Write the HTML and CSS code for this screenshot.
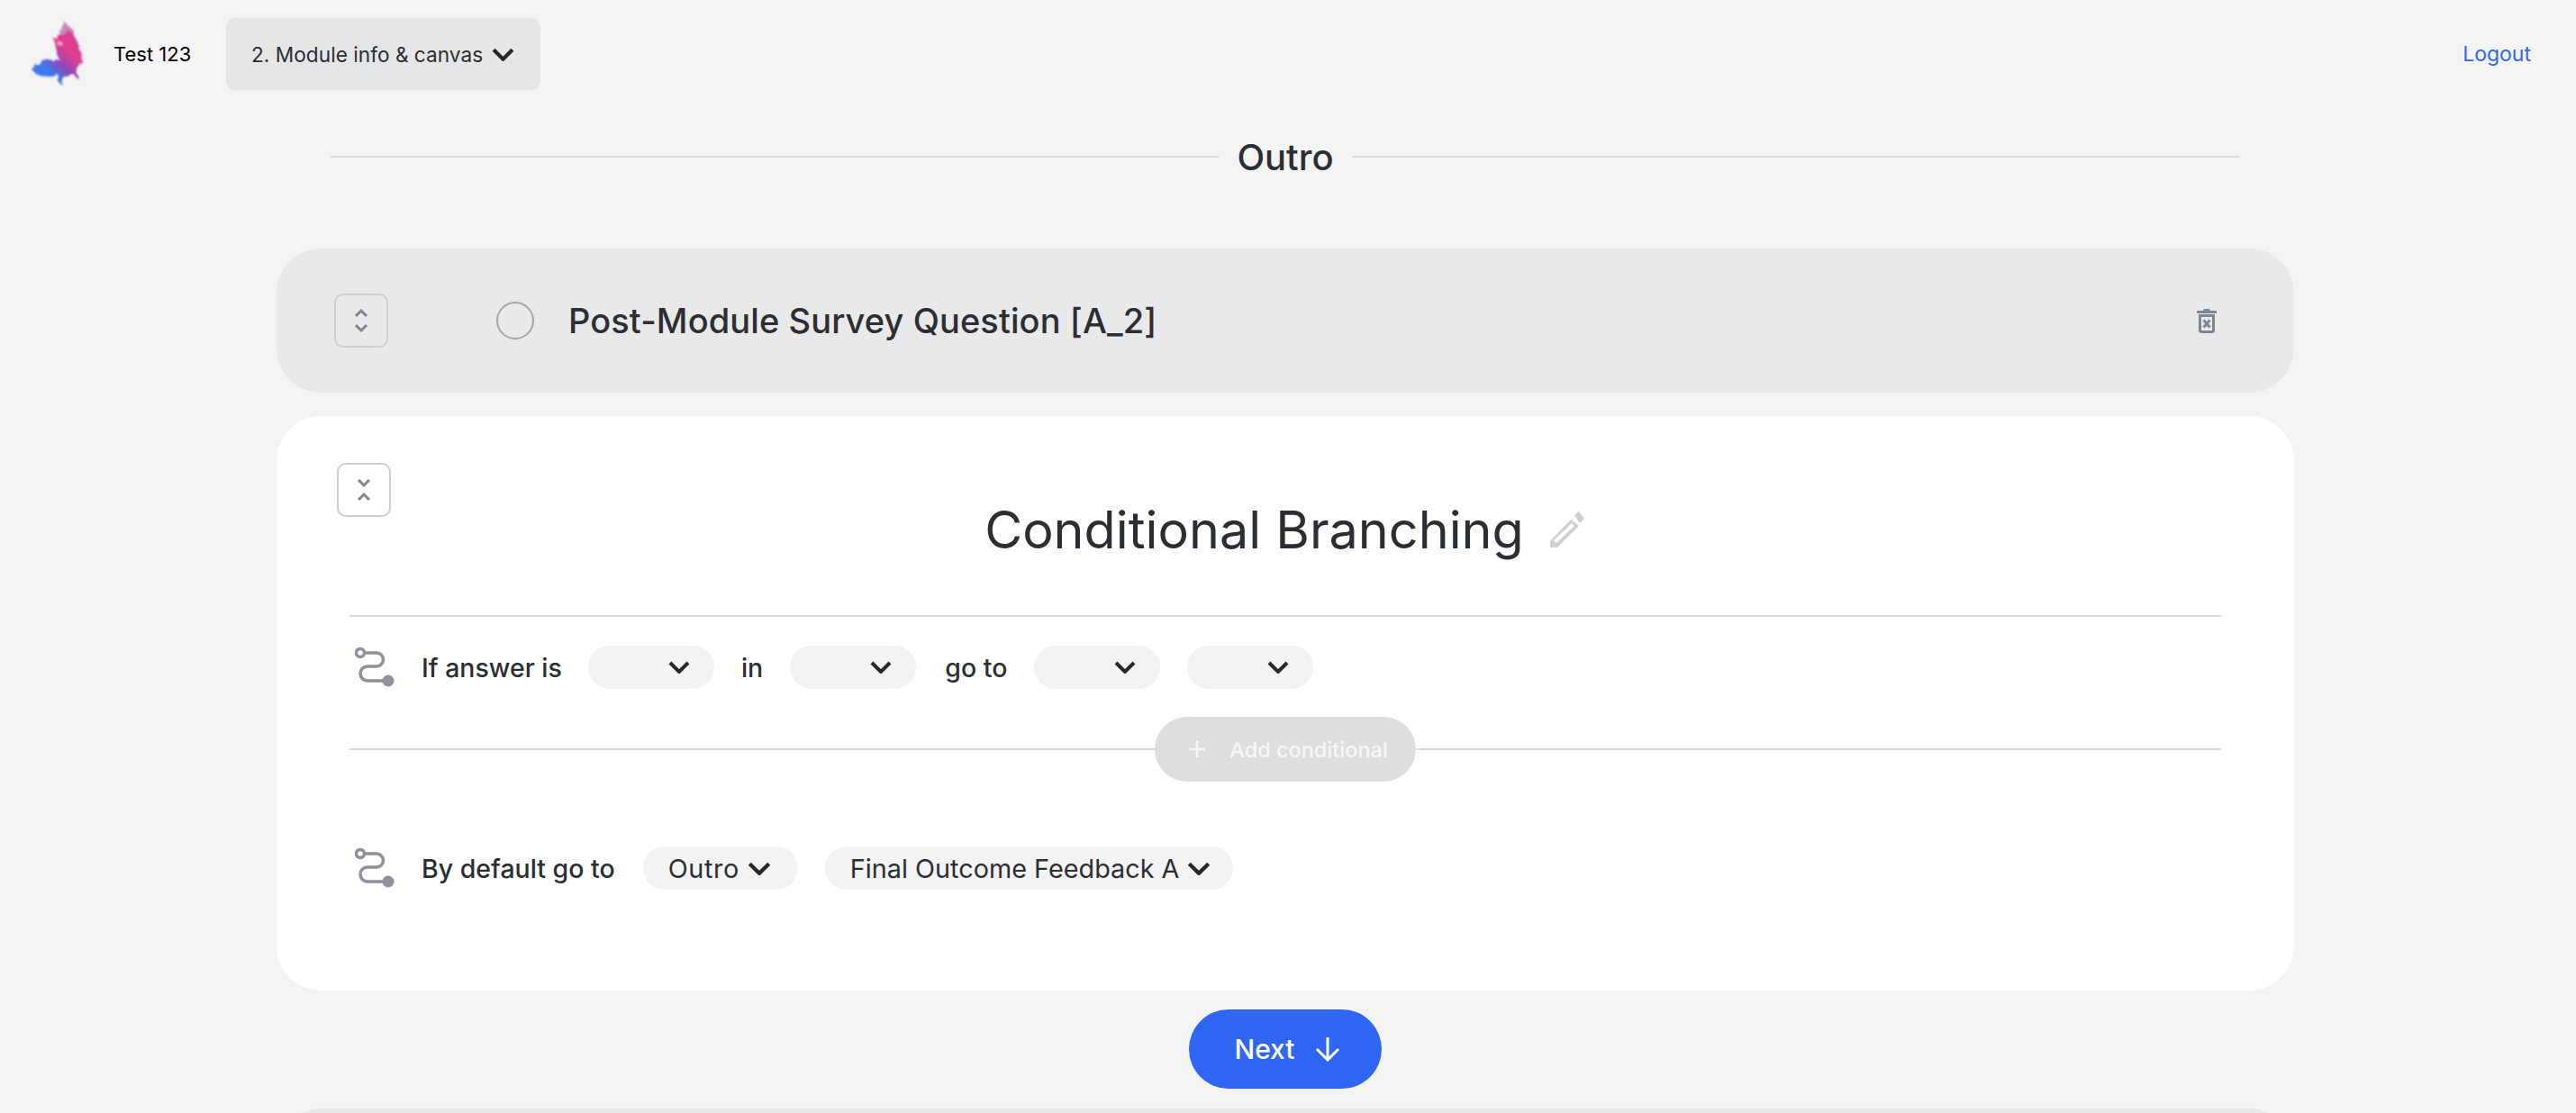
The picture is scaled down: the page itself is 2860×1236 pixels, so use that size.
FILE: index.html
```html
<!DOCTYPE html>
<html lang="en">
<head>
  <meta charset="UTF-8" />
  <meta name="viewport" content="width=device-width, initial-scale=1.0"/>
  <title>Test 123 - Module info &amp; canvas</title>
  <link rel="stylesheet" href="styles.css">
</head>
<body>
  <header class="topbar">
    <svg class="logo" viewBox="0 0 60 76" width="60" height="76" aria-hidden="true">
      <defs>
        <linearGradient id="logo-grad" gradientUnits="userSpaceOnUse" x1="46" y1="22" x2="14" y2="58">
          <stop offset="0" stop-color="#d9408f"/>
          <stop offset="0.25" stop-color="#e23d8c"/>
          <stop offset="0.6" stop-color="#9046bb"/>
          <stop offset="0.88" stop-color="#3f77ea"/>
        </linearGradient>
        <filter id="logo-ink" x="-10%" y="-10%" width="120%" height="120%">
          <feTurbulence type="fractalNoise" baseFrequency="0.14" numOctaves="2" seed="4" result="noise"/>
          <feDisplacementMap in="SourceGraphic" in2="noise" scale="7"/>
          <feGaussianBlur stdDeviation="0.8"/>
        </filter>
      </defs>
      <g filter="url(#logo-ink)">
        <path fill="#c58ac0" d="M37 1l4 5 6 5 2 10-12 2-4-9 2-6z"/>
        <path fill="url(#logo-grad)" d="M37 14l8-1 5 8 4 5 1 9 2 10-3 7-3 4 2 10-6-6-5 0-5 2-2 11-3-3-2-10-10 3-12-1-6-6 5-7 10-4 11-2 4 1-2-6-3-6 1-5-1-5 4-4 6-1z"/>
        <circle cx="33" cy="27" r="2.4" fill="#f0a8cc"/>
      </g>
    </svg>
    <span class="project-name">Test 123</span>
    <button class="step-select">2. Module info &amp; canvas
      <svg class="chevron" viewBox="0 0 24 14" width="25" height="15"><path d="M2 2l10 10L22 2"/></svg>
    </button>
    <a class="logout" href="#">Logout</a>
  </header>

  <main class="content">
    <div class="section-title">
      <span class="rule"></span>
      <h2>Outro</h2>
      <span class="rule"></span>
    </div>

    <section class="card card-closed">
      <button class="toggle">
        <svg viewBox="0 0 16 26" width="16" height="26"><path d="M2 8l6-6 6 6M2 18l6 6 6-6"/></svg>
      </button>
      <span class="radio"></span>
      <h3>Post-Module Survey Question [A_2]</h3>
      <svg class="trash" viewBox="0 0 22 28" width="22" height="28">
        <path class="trash-fill" d="M0 3h7l1-2h6l1 2h7v3H0zM2 7h18v18a3 3 0 0 1-3 3H5a3 3 0 0 1-3-3zM5 10v15h12V10z"/>
        <path class="trash-x" d="M7.5 13.5l7 8M14.5 13.5l-7 8"/>
      </svg>
    </section>

    <section class="card card-open">
      <div class="card-head">
        <button class="toggle toggle-open">
          <svg viewBox="0 0 16 26" width="16" height="26"><path d="M2 2l6 6 6-6M2 24l6-6 6 6"/></svg>
        </button>
        <h1>Conditional Branching
          <svg class="pencil" viewBox="0 0 40 40" width="40" height="40"><path d="M0 33L23 9l9 7L8 40H0zM4 32l3 3 20-19-3-3zM27 4l5-4 6 8-5 5z"/></svg>
        </h1>
      </div>

      <div class="branch branch-if">
        <svg class="branch-icon" viewBox="0 0 44 44" width="44" height="44"><circle cx="6" cy="6" r="4.5"/><path d="M10 6h14a7 7 0 0 1 0 15H14a7.5 7.5 0 0 0 0 16h20"/><circle class="dot" cx="37" cy="37" r="6.5"/></svg>
        <span class="label-if">If answer is</span>
        <button class="pill pill-empty"><svg class="chevron" viewBox="0 0 24 14" width="24" height="14"><path d="M2 2l10 10L22 2"/></svg></button>
        <span>in</span>
        <button class="pill pill-empty"><svg class="chevron" viewBox="0 0 24 14" width="24" height="14"><path d="M2 2l10 10L22 2"/></svg></button>
        <span class="label-goto">go to</span>
        <button class="pill pill-empty"><svg class="chevron" viewBox="0 0 24 14" width="24" height="14"><path d="M2 2l10 10L22 2"/></svg></button>
        <button class="pill pill-empty"><svg class="chevron" viewBox="0 0 24 14" width="24" height="14"><path d="M2 2l10 10L22 2"/></svg></button>
      </div>

      <div class="add-row">
        <span class="rule"></span>
        <button class="add-btn">
          <svg viewBox="0 0 20 20" width="20" height="20"><path d="M10 1v18M1 10h18"/></svg>
          Add conditional
        </button>
        <span class="rule"></span>
      </div>

      <div class="branch branch-default">
        <svg class="branch-icon" viewBox="0 0 44 44" width="44" height="44"><circle cx="6" cy="6" r="4.5"/><path d="M10 6h14a7 7 0 0 1 0 15H14a7.5 7.5 0 0 0 0 16h20"/><circle class="dot" cx="37" cy="37" r="6.5"/></svg>
        <span class="label-default">By default go to</span>
        <button class="pill pill-outro">Outro <svg class="chevron" viewBox="0 0 24 14" width="26" height="15"><path d="M2 2l10 10L22 2"/></svg></button>
        <button class="pill pill-final">Final Outcome Feedback A <svg class="chevron" viewBox="0 0 24 14" width="26" height="15"><path d="M2 2l10 10L22 2"/></svg></button>
      </div>
    </section>

    <div class="next-row">
      <button class="next-btn">Next
        <svg viewBox="0 0 28 28" width="28" height="28"><path d="M14 1v25M2 14l12 12 12-12"/></svg>
      </button>
    </div>

    <section class="card card-closed"></section>
  </main>
</body>
</html>
```

FILE: styles.css
```css
html, body {
  height: 100%;
  overflow: hidden;
}
body {
  margin: 0;
  background: #f4f4f4;
  color: #2b2e33;
  font-family: "Inter", "Liberation Sans", sans-serif;
}
button {
  font-family: inherit;
  border: 0;
  cursor: pointer;
}
h1, h2, h3 {
  margin: 0;
  font-weight: 500;
}
.chevron path {
  fill: none;
  stroke: #25282d;
  stroke-width: 4;
}

/* top bar */
.topbar {
  display: flex;
  align-items: center;
  padding: 20px 50px 20px 34px;
}
.logo {
  margin-right: 32px;
}
.project-name {
  width: 125px;
  font-size: 22px;
  color: #000;
}
.step-select {
  display: flex;
  align-items: center;
  justify-content: space-between;
  width: 349px;
  height: 80px;
  padding: 0 29px 0 28px;
  border-radius: 10px;
  background: #e6e6e6;
  color: #2b2e33;
  font-size: 22.7px;
}
.logout {
  margin-left: auto;
  color: #2f66f6;
  font-size: 23px;
  text-decoration: none;
}

/* page column */
.content {
  width: 2240px;
  margin-left: 307px;
}
.section-title {
  display: flex;
  align-items: center;
  gap: 20px;
  height: 60px;
  margin: 24px 60px 72px;
}
.section-title h2 {
  font-size: 40px;
}
.rule {
  flex: 1;
  height: 2px;
  background: #dcdcdc;
}

/* cards */
.card {
  border-radius: 50px;
  box-sizing: border-box;
}
.card-closed {
  display: flex;
  align-items: center;
  height: 160px;
  padding: 0 86px 0 64px;
  background: #e9e9e9;
}
.card-closed h3 {
  font-size: 38px;
  letter-spacing: 0.1px;
}
.toggle {
  display: flex;
  align-items: center;
  justify-content: center;
  width: 60px;
  height: 60px;
  padding: 0;
  border: 2px solid #cfcfcf;
  border-radius: 10px;
  background: transparent;
}
.toggle svg path {
  fill: none;
  stroke: #7f8691;
  stroke-width: 3;
}
.radio {
  width: 38px;
  height: 38px;
  margin: 0 38px 0 120px;
  border: 2px solid #a3a6ab;
  border-radius: 50%;
}
.trash {
  margin-left: auto;
}
.trash-fill {
  fill: #7f8691;
  fill-rule: evenodd;
}
.trash-x {
  fill: none;
  stroke: #7f8691;
  stroke-width: 3;
}

.card-open {
  height: 638px;
  margin-top: 26px;
  padding: 52px 81px 0;
  background: #fff;
}
.card-head {
  display: grid;
  grid-template-columns: 1fr auto 1fr;
  height: 169px;
  border-bottom: 2px solid #dcdcdc;
}
.toggle-open {
  margin-left: -14px;
}
.card-head h1 {
  grid-column: 2;
  display: flex;
  align-items: center;
  gap: 29px;
  height: 72px;
  margin-top: 38px;
  font-size: 57.5px;
  font-weight: 400;
}
.pencil path {
  fill: #cfcfcf;
  fill-rule: evenodd;
}

.branch {
  display: flex;
  align-items: center;
  height: 48px;
  font-size: 28.5px;
  font-weight: 500;
}
.branch-if {
  margin-top: 32px;
}
.branch-default {
  margin-top: 72px;
}
.branch > span {
  margin: 0 30px 0 0;
}
.branch > .label-if {
  margin-right: 29px;
}
.branch > .label-goto {
  margin: 0 30px 0 2px;
}
.branch > .label-default {
  margin-right: 31px;
}
.branch-icon {
  margin: 0 30px 0 6px;
}
.branch-icon circle, .branch-icon path {
  fill: none;
  stroke: #8d929b;
  stroke-width: 3.5;
}
.branch-icon .dot {
  fill: #8d929b;
  stroke: none;
}
.pill {
  display: flex;
  align-items: center;
  justify-content: flex-end;
  gap: 9px;
  height: 48px;
  margin-right: 30px;
  padding: 0 27px 0 28px;
  border-radius: 24px;
  background: #f3f3f3;
  color: #2b2e33;
  font-size: 28.8px;
  font-weight: 400;
}
.pill-empty {
  width: 140px;
}
.pill-outro {
  padding-right: 30px;
  letter-spacing: 0.6px;
}
.pill-final {
  padding-right: 25px;
}
.add-row {
  display: flex;
  align-items: center;
  height: 72px;
  margin-top: 31px;
}
.add-btn {
  display: flex;
  align-items: center;
  gap: 26px;
  height: 72px;
  padding: 0 31px 0 37px;
  border-radius: 36px;
  background: #dedede;
  color: #f7f7f7;
  font-size: 23.5px;
  font-weight: 500;
}
.add-btn svg path {
  fill: none;
  stroke: #f7f7f7;
  stroke-width: 2.5;
}

/* next */
.next-row {
  display: flex;
  justify-content: center;
  margin: 21px 0 22px;
}
.next-btn {
  display: flex;
  align-items: center;
  justify-content: center;
  gap: 22px;
  width: 214px;
  height: 88px;
  padding: 0 0 0 4px;
  border-radius: 44px;
  background: #2f66f6;
  color: #fff;
  font-size: 30px;
  font-weight: 500;
}
.next-btn svg path {
  fill: none;
  stroke: #fff;
  stroke-width: 3;
}
```
